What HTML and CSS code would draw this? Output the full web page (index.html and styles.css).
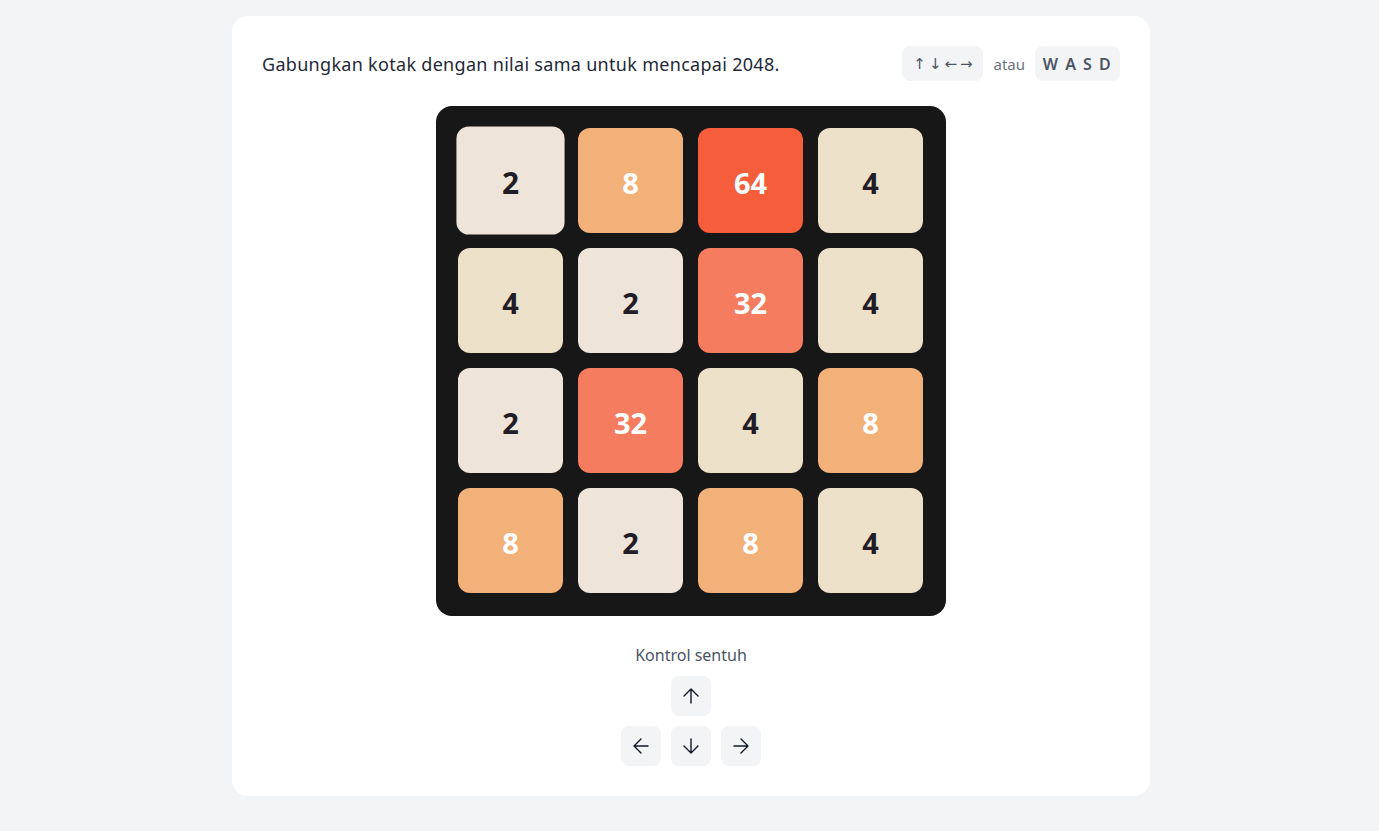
FILE: index.html
```html
<!DOCTYPE html>
<html lang="id">
<head>
    <meta charset="UTF-8">
    <meta name="viewport" content="width=device-width, initial-scale=1.0">
    <title>2048</title>
    <link rel="stylesheet" href="styles.css">
</head>
<body>
    <div class="card">
        <div class="top-bar">
            <p class="hint">Gabungkan kotak dengan nilai sama untuk mencapai 2048.</p>
            <div class="keys">
                <span class="kbd arrows">↑↓←→</span>
                <span class="or">atau</span>
                <span class="kbd wasd">W A S D</span>
            </div>
        </div>

        <div class="board">
            <div class="tile t2 pop">2</div>
            <div class="tile t8">8</div>
            <div class="tile t64">64</div>
            <div class="tile t4">4</div>

            <div class="tile t4">4</div>
            <div class="tile t2">2</div>
            <div class="tile t32">32</div>
            <div class="tile t4">4</div>

            <div class="tile t2">2</div>
            <div class="tile t32">32</div>
            <div class="tile t4">4</div>
            <div class="tile t8">8</div>

            <div class="tile t8">8</div>
            <div class="tile t2">2</div>
            <div class="tile t8">8</div>
            <div class="tile t4">4</div>
        </div>

        <div class="touch">
            <p class="touch-label">Kontrol sentuh</p>
            <div class="pad">
                <button class="pad-btn up" aria-label="Atas">
                    <svg viewBox="0 0 24 24"><path d="M12 19V5M5 12l7-7 7 7"/></svg>
                </button>
                <button class="pad-btn left" aria-label="Kiri">
                    <svg viewBox="0 0 24 24"><path d="M19 12H5M12 19l-7-7 7-7"/></svg>
                </button>
                <button class="pad-btn down" aria-label="Bawah">
                    <svg viewBox="0 0 24 24"><path d="M12 5v14M19 12l-7 7-7-7"/></svg>
                </button>
                <button class="pad-btn right" aria-label="Kanan">
                    <svg viewBox="0 0 24 24"><path d="M5 12h14M12 5l7 7-7 7"/></svg>
                </button>
            </div>
        </div>
    </div>
</body>
</html>
```

FILE: styles.css
```css
body {
    margin: 0;
    padding: 16px 0 35px 3px;
    background-color: #f3f4f6;
    font-family: "Noto Sans", "Open Sans", sans-serif;
    color: #1f2937;
}

.card {
    width: 918px;
    box-sizing: border-box;
    margin: 0 auto;
    padding: 30px;
    background-color: white;
    border-radius: 16px;
}

.top-bar {
    display: flex;
    align-items: center;
    justify-content: space-between;
    height: 35px;
}

.hint {
    margin: 0;
    font-size: 18px;
    letter-spacing: 0.3px;
    color: #1f2937;
}

.keys {
    display: flex;
    align-items: center;
    gap: 10px;
}

.kbd {
    display: inline-flex;
    align-items: center;
    justify-content: center;
    height: 35px;
    box-sizing: border-box;
    background-color: #f3f4f6;
    border-radius: 8px;
    color: #4b5563;
}

.arrows {
    width: 81px;
    font-family: "DejaVu Sans", sans-serif;
    font-size: 15px;
    letter-spacing: 3px;
    padding-left: 3px;
}

.wasd {
    width: 85px;
    font-size: 16px;
    font-weight: 600;
    letter-spacing: 1.5px;
}

.or {
    font-size: 15px;
    color: #6b7280;
}

.board {
    width: 510px;
    height: 510px;
    box-sizing: border-box;
    margin: 25px auto 0;
    padding: 22px;
    background-color: #171717;
    border-radius: 16px;
    display: grid;
    grid-template-columns: repeat(4, 105px);
    grid-template-rows: repeat(4, 105px);
    gap: 15px;
}

.tile {
    display: flex;
    align-items: center;
    justify-content: center;
    padding-top: 3px;
    border-radius: 12px;
    font-family: "Open Sans", "Noto Sans", sans-serif;
    font-size: 29px;
    font-weight: 700;
    color: #211c25;
}

.tile.pop {
    transform: scale(1.03);
}

.t2 { background-color: #eee4da; }
.t4 { background-color: #ede0c8; }
.t8 { background-color: #f2b179; color: white; }
.t32 { background-color: #f67c5f; color: white; }
.t64 { background-color: #f65e3b; color: white; }

.touch {
    margin-top: 27px;
    text-align: center;
}

.touch-label {
    margin: 0;
    font-size: 16px;
    line-height: 24px;
    color: #4b5563;
}

.pad {
    display: grid;
    grid-template-columns: repeat(3, 40px);
    grid-template-rows: repeat(2, 40px);
    gap: 10px;
    justify-content: center;
    margin-top: 9px;
}

.pad-btn {
    display: flex;
    align-items: center;
    justify-content: center;
    padding: 0;
    border: none;
    border-radius: 8px;
    background-color: #f3f4f6;
    cursor: pointer;
}

.pad-btn svg {
    width: 24px;
    height: 24px;
    fill: none;
    stroke: #111827;
    stroke-width: 1.4;
    stroke-linecap: round;
    stroke-linejoin: round;
}

.up { grid-column: 2; grid-row: 1; }
.left { grid-column: 1; grid-row: 2; }
.down { grid-column: 2; grid-row: 2; }
.right { grid-column: 3; grid-row: 2; }
```
